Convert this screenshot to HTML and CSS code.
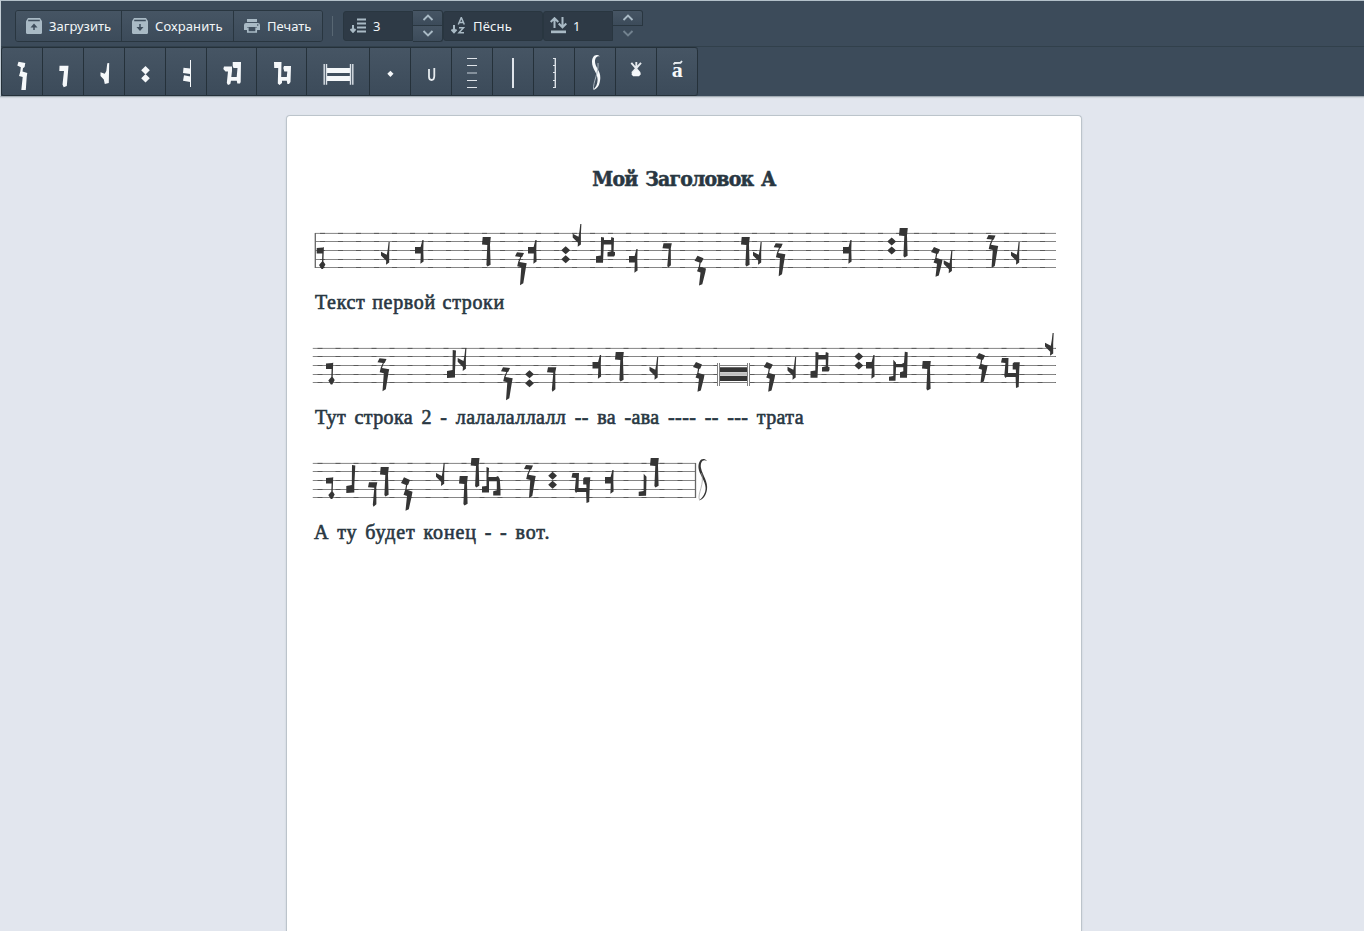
FILE: index.html
```html
<!DOCTYPE html>
<html lang="ru">
<head>
<meta charset="utf-8">
<title>Редактор нот</title>
<link rel="stylesheet" href="styles.css">
</head>
<body>
<svg class="defs" width="0" height="0">
  <defs>
    <path id="start" d="M0 .5L6.3 0L7.2 -.5L6.7 14L8.7 17L6.3 21.5H4.8L2.3 17.5L5.3 14L5.6 6H0Z"/>
    <path id="wedge" d="M7.6 0H8.7L8.2 10L8.2 20.5L5 22.8L5.2 18.8L2.2 15.8L0 13.5V9.7L5.8 12.8L6.8 7Z"/>
    <path id="flag" d="M0 7H5.6L7.4 0H8.6L8.3 10L8.6 21.5L5.4 23.7L5.8 13.5H0Z"/>
    <path id="crook" d="M.7 0H8.8L8 7.5L8.6 27.8L5.5 29.5L4.4 28L5.3 8L0 7.5Z"/>
    <path id="zig" d="M2 0L9 .6L7.3 4.5L6.3 5L4.5 9.8L11.7 11L11 14.5L8.3 31L5 33L6.3 15L2.2 14L3.3 9.3L5.3 4.6L0 4Z"/>
    <path id="zag" d="M3 0L9 2.5L7.3 6.5L6.2 7L5.5 11L11.5 12.8L10.8 16.5L7.8 28.5L4.5 29.8L6 16.7L2.5 15.5L4.3 11L5 6.8L0 5Z"/>
    <path id="pair" d="M0 -4L2 -2.2L4.4 0L2 2.2L0 4L-2 2.2L-4.4 0L-2 -2.2ZM0 5L2 6.8L4.4 9L2 11.2L0 13L-2 11.2L-4.4 9L-2 6.8Z"/>
    <path id="hook" d="M1 0H9.3L8.3 5L8.4 22L5.5 24.5L4.8 22.5L6.3 5.5L0 5Z"/>
    <path id="rise" d="M5.7 0L9 .5L8 20.5V27.5L0 28V21L5.5 20Z"/>
    <path id="riseSmall" d="M5 0L7.8 3L7.4 22L0 22.3V18L4.9 17.3Z"/>
    <path id="beamHigh" d="M5 0L8 .5V3H15L15.3 0L18 1L17.6 14.7L19 15V18L18 19.5H11.5V15.3L15.3 14.3V7.5H7.8L7 25.7H0V19.3L4.8 18.5Z"/>
    <path id="beamRise" d="M4.3 8L7 11V12.3H12.5L15 11L15.8 0L18.7 .5L18 26H11V20.5L14.3 19.5V15.5H7L6.5 29H0V25L4.3 24.3Z"/>
    <path id="beamFall" d="M1 0H7.5L7 15H15L14.8 11.5H11.7V5.5L13 4.3H18.8L18.3 11L17.7 29L15 30L14.6 19H5.5L4.5 20L3.3 18L4.4 5L0 4.5Z"/>
    <path id="beamDrop" d="M4.5 0L7 1L6.5 10H14L16 9L17.8 12L18.5 23V28.5H11.2V24.2L14.8 23.3V14.3H7V25.5H0V19.5L4.5 19Z"/>
    <g id="staffLines" class="stave"><path d="M0 15.4H744M0 23.5H744M0 32.5H744M0 41.5H744M0 49.5H744"/><path class="stave-dash" d="M5 15.4H744M5 23.5H744M5 32.5H744M5 41.5H744M5 49.5H744"/></g>
  </defs>
</svg>

<header class="header">
  <div class="bar">
    <div class="group">
      <button class="btn load"><svg width="16" height="16"><path d="M2 0H14L16 3.2V14.5Q16 16 14.5 16H1.5Q0 16 0 14.5V3.2Z"/><path class="cut" d="M2.2 2.4H13.8M8 12V8"/><path class="hole" d="M8 5.5L11.5 9.5H4.5Z"/></svg><span>Загрузить</span></button>
      <button class="btn save"><svg width="16" height="16"><path d="M2 0H14L16 3.2V14.5Q16 16 14.5 16H1.5Q0 16 0 14.5V3.2Z"/><path class="cut" d="M2.2 2.4H13.8M8 6V10"/><path class="hole" d="M8 13L4.5 9H11.5Z"/></svg><span>Сохранить</span></button>
      <button class="btn print"><svg width="16" height="14"><path d="M3 0H13V3H3ZM2 4H14Q16 4 16 6V11H13V8H3V11H0V6Q0 4 2 4Z"/><path class="paper" d="M3.8 8.5V13H12.2V8.5"/><circle cx="13.7" cy="6" r=".8" class="hole"/></svg><span>Печать</span></button>
    </div>
    <i class="divider"></i>
    <div class="field narrow"><svg width="16" height="15"><path class="line" d="M3 7V13.5M.5 11L3 13.8L5.5 11M7 1.5H16M7 5.5H16M7 9.5H16M7 13.5H16"/></svg><span>3</span></div>
    <div class="stepper"><button><svg width="12" height="7"><path class="arrow" d="M1.5 6L6 1.5L10.5 6"/></svg></button><button><svg width="12" height="7"><path class="arrow" d="M1.5 1L6 5.5L10.5 1"/></svg></button></div>
    <div class="field wide"><svg width="15" height="17"><path class="line" d="M3 8V15M.5 12.5L3 15.3L5.5 12.5"/><path class="thin" d="M7.3 7.5L10.3 .5L13.3 7.5M8.3 5.5H12.3M8 10.7H12.5L8 15.8H13"/></svg><span>Пёснь</span></div>
    <div class="field narrow last"><svg width="17" height="17"><path class="line" d="M4.5 11V1.5M.7 5L4.5 1.2L8.3 5M12.5 0V9.5M8.7 6.5L12.5 10.3L16.3 6.5"/><path d="M1 13.5H16V16.2H1Z"/></svg><span>1</span></div>
    <div class="stepper"><button><svg width="12" height="7"><path class="arrow" d="M1.5 6L6 1.5L10.5 6"/></svg></button><button class="off"><svg width="12" height="7"><path class="arrow" d="M1.5 1L6 5.5L10.5 1"/></svg></button></div>
  </div>

  <div class="notes">
    <button class="note"><svg viewBox="2 48 40 47"><path d="M18.5 61.7L25.3 63L24.6 67L23 68.3L22.5 71.5L27.3 73L26.7 77L25.8 90H21.3L22.7 77L19 76L20.3 71.5L20.8 67.3L17.3 65.5Z"/></svg></button>
    <button class="note"><svg viewBox="43 48 40 47"><path d="M59.5 65.7H68.5L68 72L66.8 86L63.7 87.3L62.5 84.5L64 71H59.3Z"/></svg></button>
    <button class="note"><svg viewBox="84 48 40 47"><path d="M107.3 63.3L109.2 63L108.8 83L104.8 84L103.8 79.5L100.5 76V72.3L104.8 73.8L106.3 71Z"/></svg></button>
    <button class="note"><svg viewBox="125 48 40 47"><path d="M145.5 66L149.8 70.2L145.5 74.4L141.2 70.2ZM145.5 74L149.8 78.3L145.5 82.4L141.2 78.3Z"/></svg></button>
    <button class="note"><svg viewBox="166 48 40 47"><path d="M190 60H191V87H190ZM183.5 67.7L190.3 68.5V74L183 73ZM184 75.2L190.3 76.5V82L183 80.8Z"/></svg></button>
    <button class="note beam"><svg viewBox="207 48 49 47"><path d="M224 66.5H232V71L231.3 77H236.7L237.5 68H233.5L232.7 66V62H241L240.7 82L240 83.5H237.3L236.8 80.7H231L230.3 84L228 85L226.8 83L228 71.5H225.5L223.3 69Z"/></svg></button>
    <button class="note beam"><svg viewBox="257 48 49 47"><path d="M274 62H281.5L281.2 77H286.8L287.3 71.5H284.3L283.3 68L284 66H291L290.5 82L289 84H287.4L286.8 80.7H282V83L279.5 85L277.8 83.5L278.2 68H274.2Z"/></svg></button>
    <button class="note long"><svg viewBox="307 48 62 47"><path d="M326 68H351V73H326ZM326 76H351V81H326Z"/><path class="mark" d="M324.2 64V84.7M326.5 64V84.7M350.5 64V84.7M352.8 64V84.7"/></svg></button>
    <button class="note"><svg viewBox="370 48 40 47"><path d="M390.4 70.7L393.5 73.8L390.4 76.9L387.3 73.8Z"/></svg></button>
    <button class="note"><svg viewBox="411 48 40 47"><path class="cup" d="M429 69V77Q429.2 80 431.5 80Q434.2 80 434.3 76V68"/></svg></button>
    <button class="note"><svg viewBox="452 48 40 47"><path class="rule" d="M467 58.5H477M467 65.5H477M467 80.5H477M467 87.5H477"/><path class="faint" d="M467 73H477"/></svg></button>
    <button class="note"><svg viewBox="493 48 40 47"><path class="bold" d="M513 58V88"/></svg></button>
    <button class="note"><svg viewBox="534 48 40 47"><path class="rule" d="M553 58.5H556M553 65.5H556M553 72.5H556M553 80.5H556M553 87.5H556"/><path class="mark" d="M555.3 58V88"/></svg></button>
    <button class="note"><svg viewBox="575 48 40 47"><path d="M600 56.5C597 55.5 594.8 58 595 62C595.2 67 600.7 71 600.3 78C600 84 598 89 593 90C596 87 597.5 84 597.6 80C597.8 73 592 69 592 62C592 56 596 53 600 56.5Z"/><path class="hair" d="M593.5 89C593 82 599 72 598 63"/></svg></button>
    <button class="note"><svg viewBox="616 48 40 47"><path class="cross" d="M631.3 62.8L640 73M641 62.8L632 73M636.3 62V74"/><path d="M635 70H638L641 74L639 76.3H633L631.3 74Z"/></svg></button>
    <button class="note end"><svg viewBox="657 48 40 47"><text x="671.7" y="77" class="letter">а</text><path class="cup" d="M673.5 64.5L674.8 63L680.5 62.8L682 61"/></svg></button>
  </div>
</header>

<main class="sheet">
  <h1 class="title">Мой Заголовок А</h1>

  <section class="verse">
    <svg class="score" width="760" height="70" viewBox="0 0 760 70">
      <svg x="10" y="0" width="741" height="70"><use href="#staffLines"/></svg>
      <path class="barline" d="M10.3 15V50"/>
      <use href="#start" x="11.7" y="29.5"/><use href="#wedge" x="76" y="24"/><use href="#flag" x="110" y="22"/><use href="#crook" x="177" y="19"/>
      <use href="#zig" x="210" y="34.3"/><use href="#flag" x="223" y="22"/><use href="#pair" x="260.7" y="32.3"/><use href="#wedge" x="267.7" y="6"/>
      <use href="#beamHigh" x="291" y="19"/><use href="#flag" x="324" y="31"/><use href="#hook" x="357.5" y="25.2"/><use href="#zag" x="389.5" y="37.7"/>
      <use href="#crook" x="436" y="19"/><use href="#wedge" x="448" y="24"/><use href="#zig" x="468.7" y="25.2"/><use href="#flag" x="538" y="22"/>
      <use href="#pair" x="586.7" y="23.5"/><use href="#crook" x="594" y="10"/><use href="#zag" x="626" y="29"/><use href="#wedge" x="638.7" y="32.5"/>
      <use href="#zig" x="681.5" y="17"/><use href="#wedge" x="706" y="24"/>
    </svg>
    <p class="lyric first">Текст первой строки</p>
  </section>

  <section class="verse">
    <svg class="score" width="760" height="70" viewBox="0 0 760 70">
      <svg x="7.5" y="0" width="743.5" height="70"><use href="#staffLines"/></svg>
      <use href="#start" x="21" y="30"/><use href="#zig" x="72.5" y="25.3"/><use href="#rise" x="142" y="17"/><use href="#wedge" x="152.7" y="15.3"/>
      <use href="#zig" x="196" y="34.3"/><use href="#pair" x="224.5" y="41.2"/><use href="#hook" x="242" y="34.3"/><use href="#flag" x="287.5" y="22"/>
      <use href="#crook" x="310" y="19"/><use href="#wedge" x="344.5" y="24"/><use href="#zag" x="388" y="29"/>
      <path class="erase" d="M412 14H445V54H412Z"/><path class="double" d="M412 15.4H445M412 23.5H445"/><path d="M414.5 34.3H442.5V39.2H414.5ZM414.5 42.7H442.5V48H414.5Z"/><path class="double" d="M412.5 30V53M414.5 30V53M442.5 30V53M444.5 30V53M415 32.5H442M415 41H442M415 49.5H442"/>
      <use href="#zag" x="458.7" y="29"/><use href="#wedge" x="482.5" y="24"/><use href="#beamHigh" x="505.5" y="19"/><use href="#pair" x="553.8" y="23.5"/>
      <use href="#flag" x="561" y="22"/><use href="#beamRise" x="584" y="18.7"/><use href="#crook" x="617" y="28"/><use href="#zag" x="671" y="20"/>
      <use href="#beamFall" x="696" y="25"/><use href="#wedge" x="740" y="0"/>
    </svg>
    <p class="lyric second">Тут строка 2 - лалалаллалл -- ва -ава ---- -- --- трата</p>
  </section>

  <section class="verse">
    <svg class="score" width="760" height="70" viewBox="0 0 760 70">
      <svg x="7.5" y="0" width="383" height="70"><use href="#staffLines"/></svg>
      <use href="#start" x="21" y="29.5"/><use href="#rise" x="41.3" y="17"/><use href="#hook" x="63" y="34.3"/><use href="#crook" x="75" y="19"/>
      <g transform="translate(96 29.3) scale(1 1.12)"><use href="#zag"/></g><use href="#wedge" x="131" y="15.3"/><use href="#crook" x="154" y="28"/><use href="#crook" x="165.7" y="10"/>
      <use href="#beamDrop" x="177" y="19"/><use href="#zig" x="219" y="17"/><use href="#pair" x="247.6" y="27.7"/><use href="#beamFall" x="266.5" y="25"/>
      <use href="#flag" x="300" y="22"/><use href="#riseSmall" x="333.7" y="25.7"/><use href="#crook" x="345" y="10"/>
      <path class="barline" d="M390.5 15V50"/>
      <path d="M402 13C398 10.5 395 14 396 20C397.5 27 403.3 34 402 41.5C401 48 398 51.5 394 52.5C398 49.5 400.6 45 400.6 40C400.6 33 394 26 393.5 20C393 12 398 8.5 402 13Z"/><path class="curl-hair" d="M394.5 52C392 46 400 36 396.5 25"/>
    </svg>
    <p class="lyric third">А ту будет конец - - вот.</p>
  </section>
</main>
</body>
</html>
```

FILE: styles.css
```css
* { box-sizing: border-box; }

body {
  display: flex;
  flex-direction: column;
  margin: 0;
  height: 100vh;
  overflow: hidden;
  background: #e2e6ee;
  color: #293742;
  font-family: "Noto Sans", "Open Sans", sans-serif;
}

.defs { display: block; flex: none; }

button {
  margin: 0;
  padding: 0;
  font: inherit;
  color: inherit;
  border: 0;
  background: linear-gradient(#465564, #3c4b5a);
}

.header {
  flex: none;
  height: 97px;
  border-top: 1px solid #b3c0c9;
  border-left: 1px solid #c4ced6;
  border-bottom: 1px solid #a2abb3;
  background: #3c4b5a;
  box-shadow: 0 1px 1px #d0d6dd;
}

.bar {
  display: flex;
  align-items: center;
  height: 46px;
  padding: 4px 0 0 14px;
  border-bottom: 1px solid #31404b;
  color: #f2f6f8;
  font-size: 13px;
}

.group {
  display: flex;
  height: 32px;
  border: 1px solid #293640;
  border-radius: 3px;
  overflow: hidden;
}

.btn {
  display: flex;
  align-items: center;
  gap: 7px;
  padding-left: 10px;
  border-right: 1px solid #293640;
  white-space: nowrap;
}

.btn svg, .field svg { fill: #a9bac5; flex: none; }
.load { width: 106px; }
.save { width: 112px; letter-spacing: .1px; }
.print { width: 88px; border-right: 0; }
.cut { fill: none; stroke: #3e4d5c; stroke-width: 1.5; }
.hole { fill: #3e4d5c; }
.paper { fill: none; stroke: #a9bac5; stroke-width: 1.7; }

.divider {
  width: 1px;
  height: 20px;
  margin: 0 10px 0 9px;
  background: #586773;
}

.field {
  display: flex;
  align-items: center;
  gap: 7px;
  height: 30px;
  padding-left: 6px;
  border: 1px solid #293640;
  border-radius: 3px 0 0 3px;
  background: #2e3a46;
}

.narrow { width: 70px; }
.wide { width: 100px; padding-left: 7px; border-radius: 3px; letter-spacing: .15px; }
.last { gap: 6px; }

.line { fill: none; stroke: #a9bac5; stroke-width: 2; }
.thin { fill: none; stroke: #a9bac5; stroke-width: 1.5; }

.stepper {
  display: grid;
  grid-template-rows: 16px 16px;
  width: 30px;
  height: 32px;
}

.stepper button {
  display: grid;
  place-items: center;
  border: 1px solid #293640;
  border-left: 0;
  border-radius: 0 3px 0 0;
}

.stepper button:last-child { border-top: 0; border-radius: 0 0 3px 0; }
.stepper .off { background: none; border: 0; opacity: .5; }
.arrow { fill: none; stroke: #a9bac5; stroke-width: 1.9; }

.notes {
  display: flex;
  width: 697px;
  height: 49px;
  border: 1px solid #25313a;
  border-right: 0;
  border-radius: 3px;
  overflow: hidden;
}

.note {
  display: block;
  flex: none;
  width: 41px;
  border-right: 1px solid #25313a;
}

.note svg {
  display: block;
  width: 100%;
  height: 47px;
  fill: #f5f8fa;
}

.beam { width: 50px; }
.long { width: 63px; }
.end { border-radius: 0 3px 3px 0; }
.note .mark { fill: none; stroke: #dce2e8; stroke-width: 1.4; }
.note .cup { fill: none; stroke: #e6ebef; stroke-width: 1.8; }
.note .cross { fill: none; stroke: #e6ebef; stroke-width: 1.9; }
.note .rule { fill: none; stroke: #dfe4e9; stroke-width: 1; }
.note .bold { fill: none; stroke: #dfe4ea; stroke-width: 2; }
.note .hair { fill: none; stroke: #aab6c0; stroke-width: 1; }
.note .faint { stroke: #84909c; stroke-width: 2; }
.letter { font: bold 22px "Liberation Serif", serif; }

.sheet {
  flex: 1;
  min-height: 0;
  overflow: hidden;
  width: 796px;
  margin: 18px 0 0 286px;
  padding: 0 18px;
  border: 1px solid #bcc4cb;
  border-bottom: 0;
  border-radius: 4px 4px 0 0;
  background: #fff;
  box-shadow: 0 1px 2px #c6cdd6;
}

.title {
  height: 102px;
  margin: 0;
  padding-top: 47px;
  text-align: center;
  color: #293742;
  font: bold 21px/32px "DejaVu Serif Condensed", "DejaVu Serif", serif;
  letter-spacing: -.8px;
  word-spacing: 2px;
  -webkit-text-stroke: .5px #293742;
  white-space: nowrap;
}

.verse { height: 115px; }

.score {
  display: block;
  overflow: visible;
  fill: #353535;
}

.stave { fill: none; stroke: #858585; stroke-width: 1; }
.stave-dash { stroke: #5a5a5a; stroke-dasharray: 5 13; }
.barline { stroke: #666; stroke-width: 1.3; }
.erase { fill: #fff; }
.double { stroke: #808080; stroke-width: 1; fill: none; }
.curl-hair { fill: none; stroke: #999; stroke-width: .7; }

.lyric {
  margin: 0 0 0 10px;
  font: 20px/28px "Liberation Serif", serif;
  -webkit-text-stroke: .6px #293742;
  white-space: nowrap;
}

.first { letter-spacing: .65px; word-spacing: 1.2px; }
.second { letter-spacing: .4px; word-spacing: 3px; }
.third { margin-left: 9px; letter-spacing: .9px; word-spacing: 1.9px; }
```
